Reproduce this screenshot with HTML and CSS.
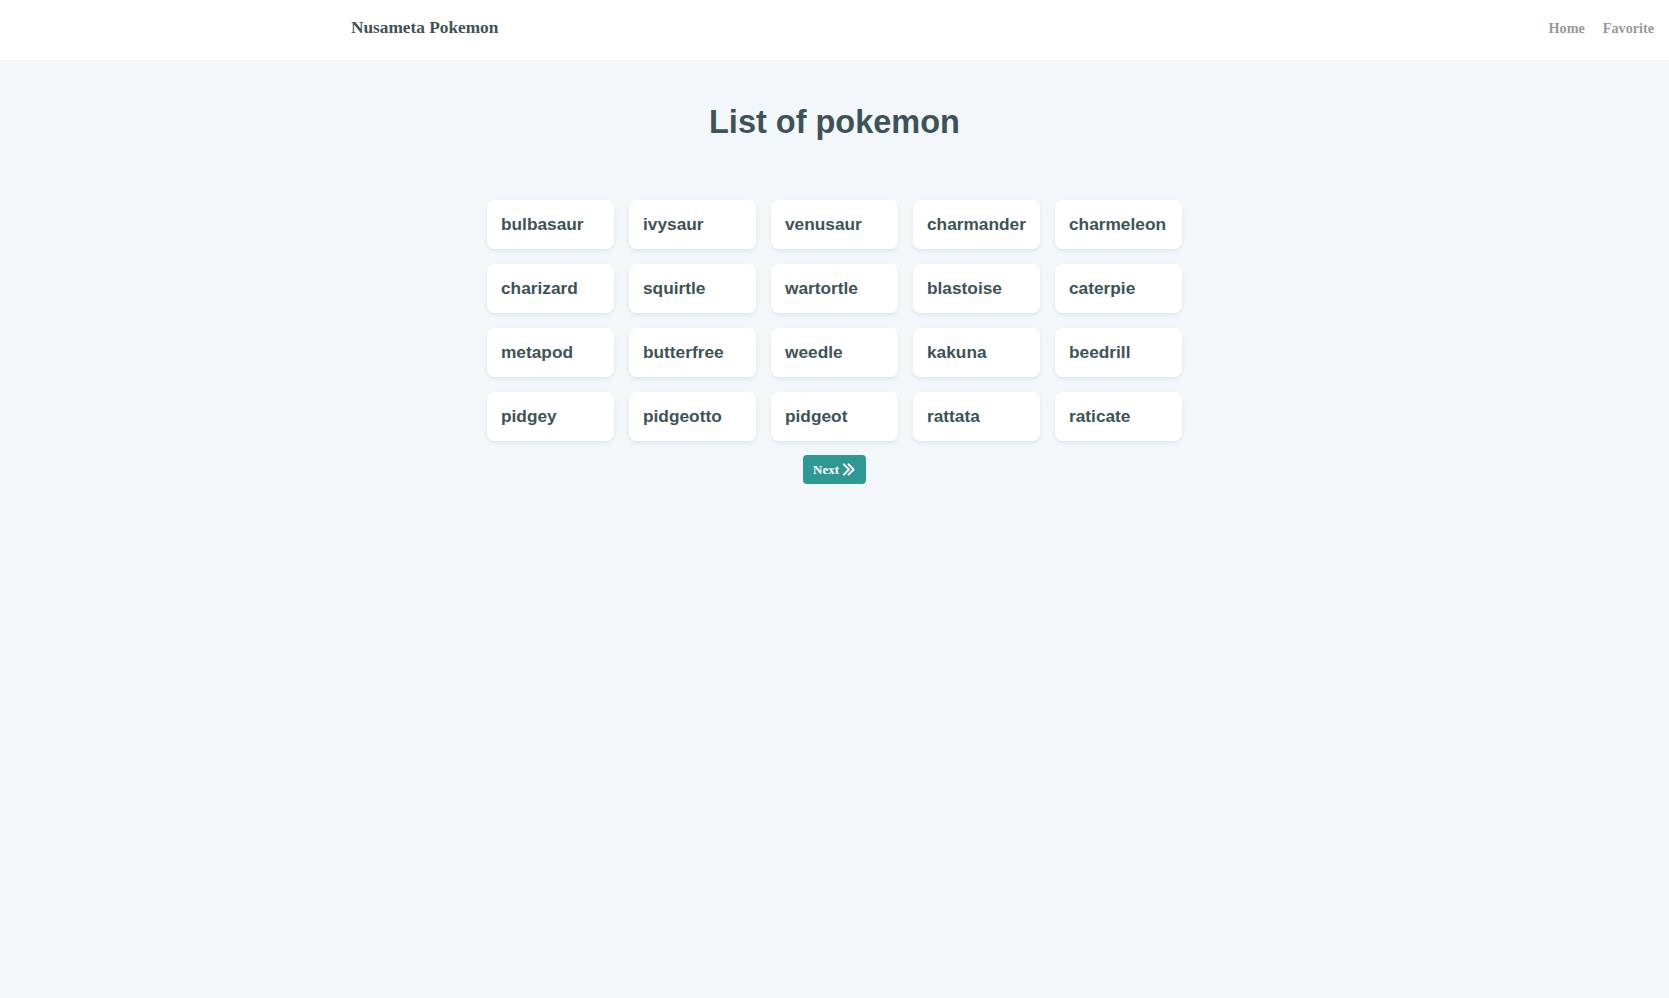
FILE: index.html
```html
<!DOCTYPE html>
<html lang="en">
<head>
<meta charset="utf-8">
<title>Nusameta Pokemon</title>
<link rel="stylesheet" href="styles.css">
</head>
<body>
<header class="navbar">
  <div class="brand">Nusameta Pokemon</div>
  <nav class="nav">
    <a class="nav-link" href="#">Home</a>
    <a class="nav-link" href="#">Favorite</a>
  </nav>
</header>
<main class="content">
  <h1 class="title">List of pokemon</h1>
  <div class="grid">
    <div class="card">bulbasaur</div>
    <div class="card">ivysaur</div>
    <div class="card">venusaur</div>
    <div class="card">charmander</div>
    <div class="card">charmeleon</div>
    <div class="card">charizard</div>
    <div class="card">squirtle</div>
    <div class="card">wartortle</div>
    <div class="card">blastoise</div>
    <div class="card">caterpie</div>
    <div class="card">metapod</div>
    <div class="card">butterfree</div>
    <div class="card">weedle</div>
    <div class="card">kakuna</div>
    <div class="card">beedrill</div>
    <div class="card">pidgey</div>
    <div class="card">pidgeotto</div>
    <div class="card">pidgeot</div>
    <div class="card">rattata</div>
    <div class="card">raticate</div>
  </div>
  <button class="next-btn" type="button">Next
    <svg class="chev" viewBox="0 0 16 16" width="15" height="15" fill="none" stroke="#fff" stroke-width="2" stroke-linecap="round" stroke-linejoin="round"><path d="M3 2.5l5.5 5.5-5.5 5.5M8 2.5l5.5 5.5-5.5 5.5"/></svg>
  </button>
</main>
</body>
</html>
```

FILE: styles.css
```css
html, body {
  margin: 0;
  padding: 0;
}
body {
  background: #f3f7fa;
  font-family: "Liberation Serif", "Times New Roman", serif;
  color: #3e5357;
  min-height: 998px;
}
.navbar {
  height: 60px;
  box-sizing: border-box;
  background: #ffffff;
  display: flex;
  align-items: center;
  justify-content: space-between;
  padding: 0 15px 4px 351px;
}
.brand {
  font-weight: bold;
  font-size: 17.3px;
  color: #3e5357;
}
.nav {
  display: flex;
  gap: 18px;
}
.nav-link {
  font-weight: bold;
  font-size: 14.2px;
  color: #999999;
  text-decoration: none;
}
.content {
  display: flex;
  flex-direction: column;
  align-items: center;
}
.title {
  font-family: "Liberation Sans", Arial, sans-serif;
  font-weight: bold;
  font-size: 32.5px;
  margin: 42px 0 0;
  line-height: 40px;
  color: #3e5357;
}
.grid {
  margin-top: 58px;
  display: grid;
  grid-template-columns: repeat(5, 127px);
  gap: 15px;
}
.card {
  height: 49px;
  box-sizing: border-box;
  display: flex;
  align-items: center;
  padding: 0 14px;
  background: #ffffff;
  border-radius: 8px;
  box-shadow: 0 2px 4px rgba(0, 0, 0, 0.08);
  font-family: "Liberation Sans", Arial, sans-serif;
  font-weight: bold;
  font-size: 17.3px;
  color: #3e5357;
}
.next-btn {
  margin-top: 14px;
  width: 63px;
  height: 29px;
  border: none;
  border-radius: 4px;
  background: #2f9893;
  color: #ffffff;
  font-family: "Liberation Serif", "Times New Roman", serif;
  font-weight: bold;
  font-size: 13px;
  display: flex;
  align-items: center;
  justify-content: center;
  gap: 2px;
  padding: 0;
}
.chev {
  display: block;
}
```
